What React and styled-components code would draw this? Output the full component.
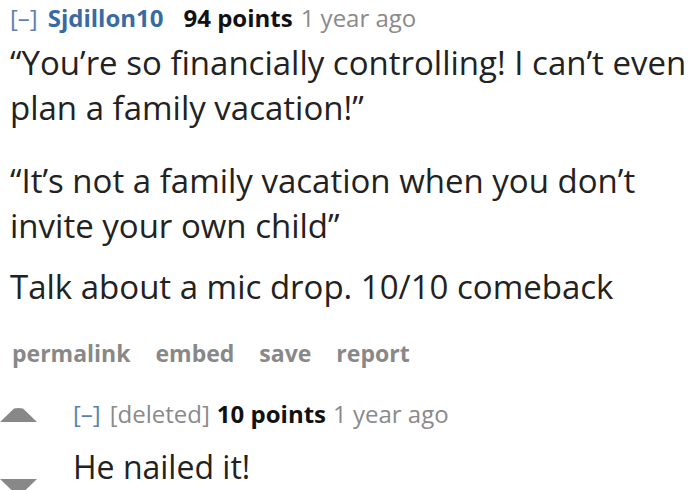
import React from "react";
import styled, { createGlobalStyle } from "styled-components";

const Global = createGlobalStyle`
  html, body { margin: 0; padding: 0; background: #fff; }
  body { font-family: "Open Sans", "Noto Sans", sans-serif; color: #222; }
`;

const Page = styled.div`
  width: 700px;
  height: 490px;
  overflow: hidden;
  padding: 5px 0 0 10px;
  box-sizing: border-box;
`;

const Tagline = styled.div`
  display: flex;
  align-items: baseline;
  gap: ${(p) => p.$gap || 8}px;
  font-size: 24px;
  line-height: 26px;
  white-space: nowrap;
`;

const Toggle = styled.span`
  color: #5a7fb0;
  font-weight: 400;
  margin-right: 2px;
`;

const Author = styled.span`
  color: ${(p) => (p.$deleted ? "#8a8a8a" : "#3a6aa3")};
  font-weight: ${(p) => (p.$deleted ? 400 : 700)};
  margin-right: ${(p) => (p.$deleted ? 0 : 12)}px;
`;

const Score = styled.span`
  color: #111;
  font-weight: 700;
`;

const Time = styled.span`
  color: #8a8a8a;
`;

const Body = styled.div`
  margin-top: 9px;
  display: flex;
  flex-direction: column;
`;

const Para = styled.p`
  margin: ${(p) => p.$gap || 0}px 0 0;
  font-size: ${(p) => p.$size || 33}px;
  line-height: 45px;
  color: #222;
  white-space: nowrap;
`;

const Buttons = styled.div`
  display: flex;
  gap: 25px;
  margin-top: 31px;
  padding-left: 2px;
`;

const Action = styled.span`
  font-size: 23px;
  line-height: 26px;
  font-weight: 700;
  color: #888;
`;

const Child = styled.div`
  display: flex;
  margin-top: 35px;
  margin-left: -10px;
`;

const Votes = styled.div`
  width: 73px;
  flex: none;
  display: flex;
  flex-direction: column;
  align-items: flex-start;
  padding-top: 7px;
  gap: 57px;
`;

const Arrow = styled.svg`
  display: block;
  width: 37px;
  height: 14px;
`;

const ChildBody = styled.div`
  display: flex;
  flex-direction: column;
`;

const ChildText = styled(Para)`
  margin-top: 17px;
`;

export default function App() {
  return (
    <Page>
      <Global />
      <Tagline>
        <Toggle>[–]</Toggle>
        <Author>Sjdillon10</Author>
        <Score>94 points</Score>
        <Time>1 year ago</Time>
      </Tagline>
      <Body>
        <Para>
          “You’re so financially controlling! I can’t even
          <br />
          plan a family vacation!”
        </Para>
        <Para $gap={28}>
          “It’s not a family vacation when you don’t
          <br />
          invite your own child”
        </Para>
        <Para $gap={16}>Talk about a mic drop. 10/10 comeback</Para>
      </Body>
      <Buttons>
        <Action>permalink</Action>
        <Action>embed</Action>
        <Action>save</Action>
        <Action>report</Action>
      </Buttons>
      <Child>
        <Votes>
          <Arrow viewBox="0 0 37 14">
            <path d="M14 0.5 Q18.5 -0.5 23 0.5 L37 14 L0 14 Z" fill="#888" />
          </Arrow>
          <Arrow viewBox="0 0 37 14">
            <path d="M0 0 L37 0 L23 13.5 Q18.5 14.5 14 13.5 Z" fill="#888" />
          </Arrow>
        </Votes>
        <ChildBody>
          <Tagline $gap={7}>
            <Toggle>[–]</Toggle>
            <Author $deleted>[deleted]</Author>
            <Score>10 points</Score>
            <Time>1 year ago</Time>
          </Tagline>
          <ChildText $size={32}>He nailed it!</ChildText>
        </ChildBody>
      </Child>
    </Page>
  );
}
